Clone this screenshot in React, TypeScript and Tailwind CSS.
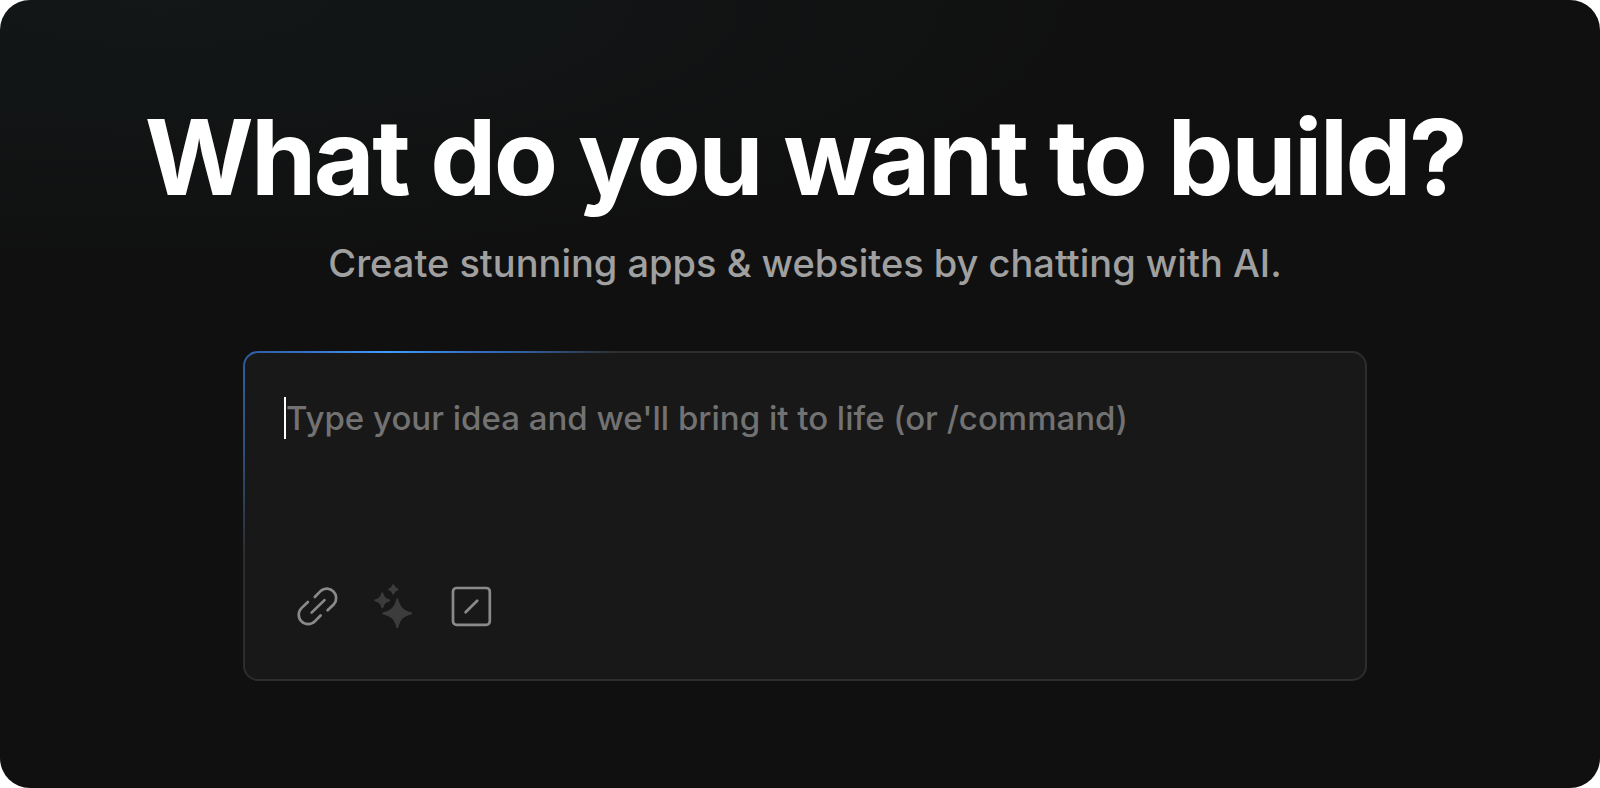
import type { ReactNode } from "react";

function LinkIcon() {
  return (
    <svg
      viewBox="0 0 48 48"
      className="size-12"
      fill="none"
      stroke="currentColor"
      strokeWidth="2.7"
      strokeLinecap="round"
      aria-hidden="true"
    >
      <path d="M20.8 14 26.7 7.9A9.4 9.4 0 0 1 39.9 21.2L33.6 27.3" />
      <path d="M26.6 32.5 20.8 38.4A9.4 9.4 0 0 1 7.5 25.1L13.9 19" />
      <path d="M17.6 29.6 30.5 17.1" />
    </svg>
  );
}

function SparklesIcon() {
  return (
    <svg
      viewBox="0 0 48 48"
      className="size-12"
      fill="currentColor"
      stroke="currentColor"
      strokeWidth="1.8"
      strokeLinejoin="round"
      aria-hidden="true"
    >
      <path d="M27.3 16.2C29.8 25 32.6 27.8 41.4 30.3C32.6 32.8 29.8 35.6 27.3 44.4C24.8 35.6 22 32.8 13.2 30.3C22 27.8 24.8 25 27.3 16.2Z" />
      <path d="M12.3 10.2C13.7 14.6 15 15.9 19.4 17.3C15 18.7 13.7 20 12.3 24.4C10.9 20 9.6 18.7 5.2 17.3C9.6 15.9 10.9 14.6 12.3 10.2Z" />
      <path d="M23.3 2.1C24.1 4.8 24.9 5.6 27.6 6.4C24.9 7.2 24.1 8 23.3 10.7C22.5 8 21.7 7.2 19 6.4C21.7 5.6 22.5 4.8 23.3 2.1Z" />
    </svg>
  );
}

function CommandIcon() {
  return (
    <svg
      viewBox="0 0 48 48"
      className="size-12"
      fill="none"
      stroke="currentColor"
      strokeWidth="2.7"
      strokeLinecap="round"
      aria-hidden="true"
    >
      <rect x="7" y="5" width="36.8" height="36.8" rx="3.6" />
      <path d="M19.6 29.2 31.2 17.8" />
    </svg>
  );
}

function ToolButton({
  label,
  disabled,
  children,
}: {
  label: string;
  disabled?: boolean;
  children: ReactNode;
}) {
  return (
    <button
      type="button"
      aria-label={label}
      disabled={disabled}
      className="text-[#8a8a8a] disabled:text-[#3c3c3c]"
    >
      {children}
    </button>
  );
}

export default function App() {
  return (
    <div className="bg-white font-[Inter,sans-serif]">
      <main className="flex min-h-screen flex-col items-center rounded-[30px] bg-[#101010] bg-[radial-gradient(ellipse_60%_34%_at_10%_0%,#131718,#101010)] pt-[103px] pr-10 pb-12 pl-[50px]">
        <h1 className="text-center text-[105px] leading-[108px] font-bold tracking-tight text-white">
          What do you want to build?
        </h1>
        <p className="mt-7 text-center text-[38px] leading-12 font-medium text-[#a0a0a0]">
          Create stunning apps &amp; websites by chatting with AI.
        </p>

        {/* the glow runs along the top left of the 2px frame */}
        <form className="mt-16 w-3/4 max-w-[1124px] rounded-[15px] bg-[#2d2d2d] bg-[radial-gradient(ellipse_230px_255px_at_144px_0px,#3f9dff,#3570c8_36%,#3060a4_58%,#2d2d2d)] p-[2px]">
          <div className="rounded-[13px] bg-[#181818] px-[39px] pt-11 pb-12">
            <div className="flex">
              <span className="h-[42px] w-[2px] bg-white" />
              <textarea
                aria-label="Your idea"
                placeholder="Type your idea and we'll bring it to life (or /command)"
                className="h-[186px] flex-1 resize-none bg-transparent text-[33px] leading-[42px] font-medium text-white outline-none placeholder:text-[#727272]"
              />
            </div>
            <div className="flex gap-7 pl-[10px]">
              <ToolButton label="Attach a link">
                <LinkIcon />
              </ToolButton>
              <ToolButton label="Enhance prompt" disabled>
                <SparklesIcon />
              </ToolButton>
              <ToolButton label="Commands">
                <CommandIcon />
              </ToolButton>
            </div>
          </div>
        </form>
      </main>
    </div>
  );
}
